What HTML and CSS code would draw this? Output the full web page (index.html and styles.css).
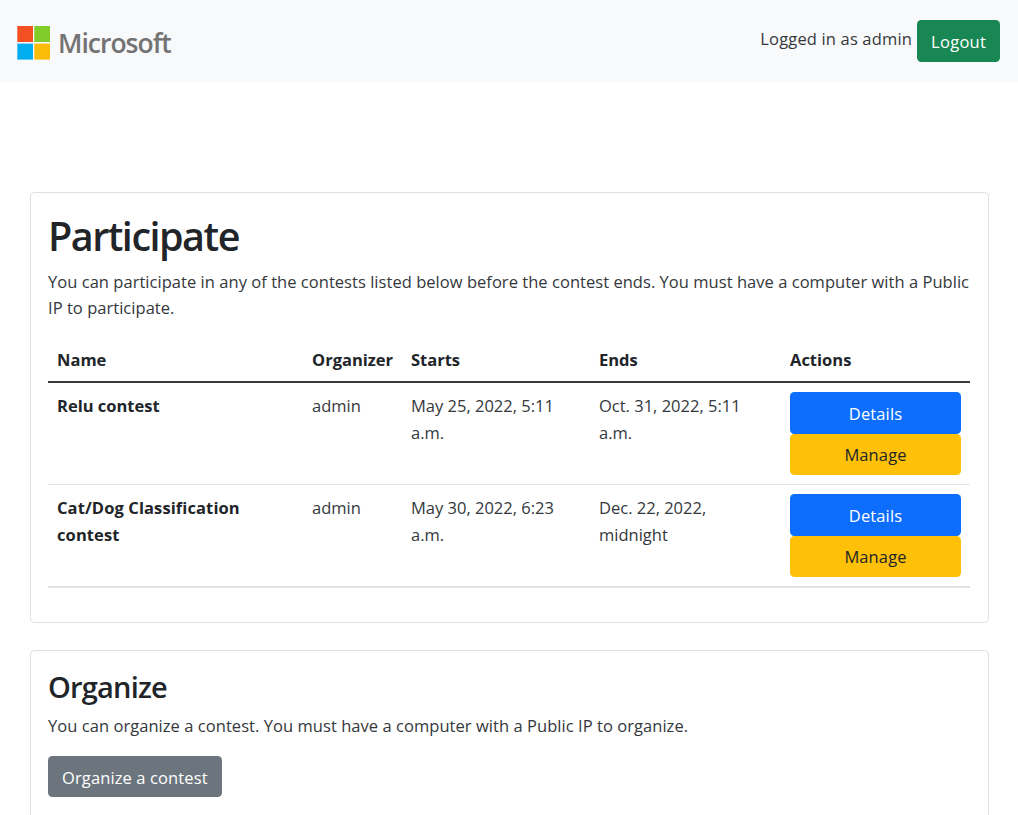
FILE: index.html
```html
<!DOCTYPE html>
<html lang="en">
<head>
<meta charset="utf-8">
<title>Contests</title>
<link rel="stylesheet" href="styles.css">
</head>
<body>
<header class="navbar">
  <a class="brand">
    <svg class="brand-mark" width="33" height="34" viewBox="0 0 33 34">
      <rect x="0.3" y="0" width="15.7" height="16" fill="#f25022"/>
      <rect x="17.3" y="0" width="15.7" height="16" fill="#80cc28"/>
      <rect x="0.3" y="17.6" width="15.7" height="16" fill="#00adef"/>
      <rect x="17.3" y="17.6" width="15.7" height="16" fill="#fbbc09"/>
    </svg>
    <span class="brand-name">Microsoft</span>
  </a>
  <div class="account">
    <span class="user">Logged in as admin</span>
    <a class="btn btn-success">Logout</a>
  </div>
</header>
<main class="content">
  <section class="card card-participate">
    <h1 class="title">Participate</h1>
    <p class="lead">You can participate in any of the contests listed below before the contest ends. You must have a computer with a Public<br>IP to participate.</p>
    <table class="table">
      <colgroup><col class="c-name"><col class="c-org"><col class="c-start"><col class="c-end"><col class="c-act"></colgroup>
      <thead>
        <tr><th>Name</th><th>Organizer</th><th>Starts</th><th>Ends</th><th>Actions</th></tr>
      </thead>
      <tbody>
        <tr>
          <th>Relu contest</th><td>admin</td><td>May 25, 2022, 5:11<br>a.m.</td><td>Oct. 31, 2022, 5:11<br>a.m.</td>
          <td class="cell-actions"><div class="actions"><a class="btn btn-primary">Details</a><a class="btn btn-warning">Manage</a></div></td>
        </tr>
        <tr>
          <th class="long-name">Cat/Dog Classification<br>contest</th><td>admin</td><td>May 30, 2022, 6:23<br>a.m.</td><td>Dec. 22, 2022,<br>midnight</td>
          <td class="cell-actions"><div class="actions"><a class="btn btn-primary">Details</a><a class="btn btn-warning">Manage</a></div></td>
        </tr>
      </tbody>
    </table>
  </section>
  <section class="card">
    <h2 class="subtitle">Organize</h2>
    <p class="lead organize-text">You can organize a contest. You must have a computer with a Public IP to organize.</p>
    <a class="btn btn-secondary">Organize a contest</a>
  </section>
</main>
</body>
</html>
```
FILE: styles.css
```css
* { box-sizing: border-box; }
html { overflow: hidden; }
body {
  margin: 0;
  height: 815px;
  overflow: hidden;
  background: #fff;
  color: #212529;
  font: 400 16.5px/26.4px "Open Sans", "Noto Sans", sans-serif;
}
.navbar {
  display: flex;
  justify-content: space-between;
  align-items: center;
  height: 82px;
  padding: 0 18px 0 17px;
  background: #f8f9fb;
}
.brand { display: flex; align-items: center; gap: 8px; padding-top: 4px; }
.brand-mark { display: block; }
.brand-name { color: #737373; font-size: 26.5px; font-weight: 600; letter-spacing: -1px; }
.account { display: flex; align-items: center; gap: 5px; color: #34383c; }
.user { padding-bottom: 3px; letter-spacing: 0.16px; }
.btn {
  display: inline-block;
  height: 42px;
  padding: 9px 14px 0;
  border-radius: 4.4px;
  line-height: 26px;
  letter-spacing: 0.12px;
  text-align: center;
  color: #fff;
}
.btn-success { width: 83px; background: #198754; letter-spacing: 0.3px; }
.btn-primary { background: #0d6efd; }
.btn-warning { height: 41px; padding-top: 8px; background: #ffc107; color: #212529; }
.btn-secondary { height: 41px; background: #6c757d; }
.content { display: flex; flex-direction: column; gap: 27px; padding: 110px 29px 0 30px; }
.card { height: 200px; padding: 17px 18px 0 17px; border: 1px solid #dfdfdf; border-radius: 4.4px; }
.card-participate { height: 431px; }
.title { margin: 0 0 6px; font-size: 39.5px; line-height: 53px; font-weight: 600; letter-spacing: -1.5px; }
.subtitle { margin: 0 0 7px; font-size: 29px; line-height: 38px; font-weight: 600; letter-spacing: -0.8px; }
.lead { margin: 0; white-space: nowrap; color: #34383c; letter-spacing: 0.037px; }
.organize-text { margin-bottom: 17px; letter-spacing: 0.05px; }
.table { width: 922px; margin-top: 16px; border-collapse: collapse; table-layout: fixed; }
.c-name { width: 255px; }
.c-org { width: 99px; }
.c-start { width: 188px; }
.c-end { width: 191px; }
.table th, .table td { padding: 10px 9px 0; text-align: left; vertical-align: top; white-space: nowrap; border-bottom: 1px solid #e3e6e9; }
.table td { color: #34383c; }
.table thead th { padding: 9px 9px 8px; border-bottom: 2px solid #36393d; }
.table .long-name { letter-spacing: 0.1px; }
.table .cell-actions { padding: 9px; }
.table tbody tr:last-child > * { border-bottom: 2px solid #e0e3e6; }
.actions { display: grid; }
```
